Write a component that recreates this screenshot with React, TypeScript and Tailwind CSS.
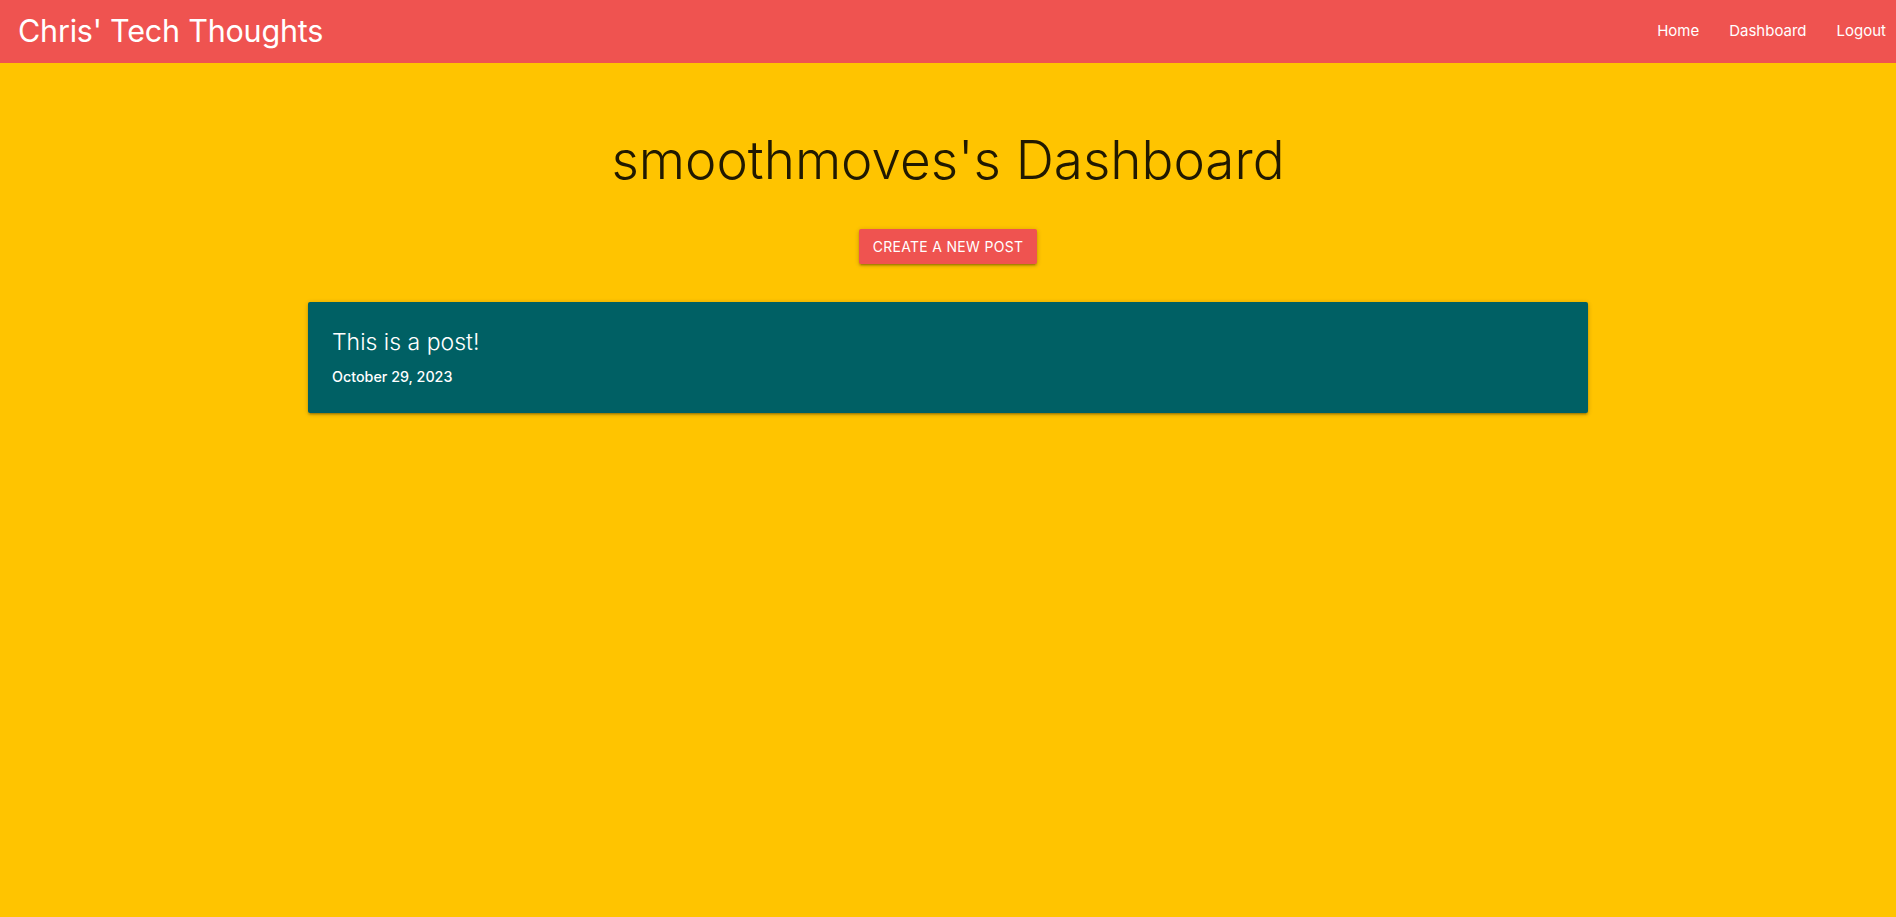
export default function App() {
  return (
    <div
      className="min-h-[917px] bg-[#ffc400]"
      style={{ fontFamily: "Inter, 'Noto Sans', sans-serif" }}
    >
      <nav className="flex h-[63px] items-center justify-between bg-[#ef5350] text-white">
        <a className="pl-[18px] text-[30.5px] leading-none tracking-[-0.2px]" href="#">
          Chris' Tech Thoughts
        </a>
        <ul className="flex h-full items-center text-[15px]">
          <li>
            <a className="px-[15px]" href="#">
              Home
            </a>
          </li>
          <li>
            <a className="px-[15px]" href="#">
              Dashboard
            </a>
          </li>
          <li>
            <a className="pl-[15px] pr-[10px]" href="#">
              Logout
            </a>
          </li>
        </ul>
      </nav>

      <main className="mx-auto w-[1280px]">
        <h1 className="mt-[65px] text-center text-[53px] font-light leading-[64px] text-[#211900]">
          smoothmoves's Dashboard
        </h1>
        <div className="mt-[37px] flex justify-center">
          <button className="h-[35px] rounded-[2px] bg-[#ef5350] px-[14px] text-[14px] uppercase tracking-[0.3px] text-white shadow-[0_2px_2px_0_rgba(0,0,0,0.14),0_3px_1px_-2px_rgba(0,0,0,0.12),0_1px_5px_0_rgba(0,0,0,0.2)]">
            Create a new post
          </button>
        </div>
        <div className="mt-[38px] h-[111px] rounded-[2px] bg-[#006064] px-[24px] pt-[24px] text-white shadow-[0_2px_2px_0_rgba(0,0,0,0.14),0_3px_1px_-2px_rgba(0,0,0,0.12),0_1px_5px_0_rgba(0,0,0,0.2)]">
          <h2 className="text-[23px] font-light leading-[32px]">This is a post!</h2>
          <p className="mt-[9px] text-[14.3px] font-medium leading-[20px]">October 29, 2023</p>
        </div>
      </main>
    </div>
  );
}
